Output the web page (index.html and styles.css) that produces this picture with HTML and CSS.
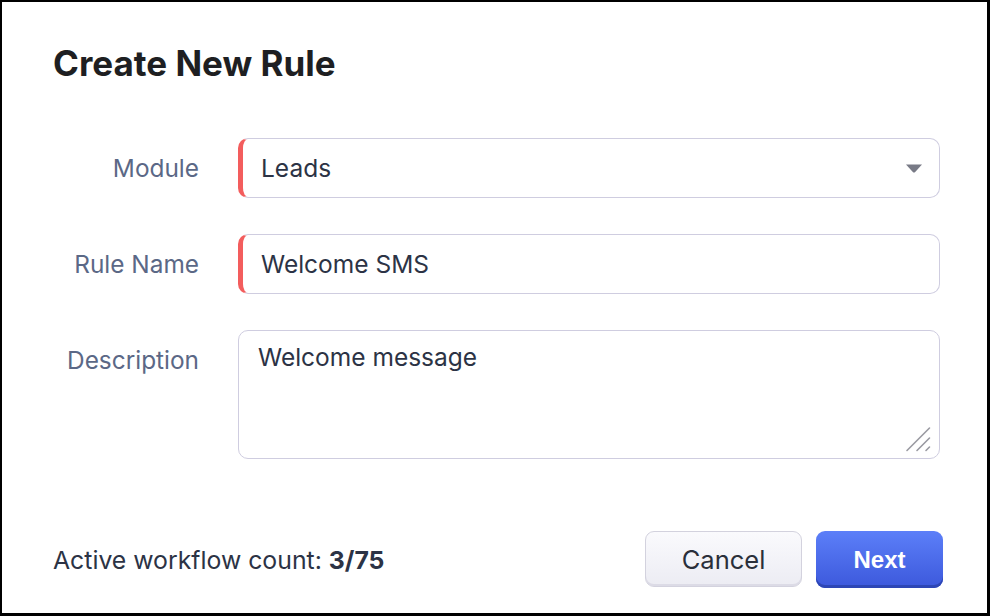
FILE: index.html
```html
<!DOCTYPE html>
<html lang="en">
<head>
<meta charset="utf-8">
<title>Create New Rule</title>
<link rel="stylesheet" href="styles.css">
</head>
<body>
<div class="dialog">
  <h1 class="title">Create New Rule</h1>
  <div class="form">
    <div class="row">
      <label class="label">Module</label>
      <div class="field required select">
        <span class="value">Leads</span>
        <svg class="caret" width="16" height="9" viewBox="0 0 16 9"><path d="M0 0.5 H16 L9.2 8 Q8 9 6.8 8 Z" fill="#787a86"/></svg>
      </div>
    </div>
    <div class="row">
      <label class="label">Rule Name</label>
      <div class="field required">
        <input class="input" type="text" value="Welcome SMS">
      </div>
    </div>
    <div class="row row-top">
      <label class="label label-top">Description</label>
      <div class="area-wrap">
        <textarea class="textarea">Welcome message</textarea>
        <svg class="grip" width="26" height="26" viewBox="0 0 26 26"><path d="M2 24.5 L24.5 2 M12 24.5 L24.5 12 M21 24.5 L24.5 21" stroke="#9a9aa2" stroke-width="1.6" stroke-linecap="round" fill="none"/></svg>
      </div>
    </div>
  </div>
  <div class="footer">
    <div class="count">Active workflow count: <b>3/75</b></div>
    <div class="actions">
      <button class="btn btn-cancel">Cancel</button>
      <button class="btn btn-next">Next</button>
    </div>
  </div>
</div>
</body>
</html>
```
FILE: styles.css
```css
* { box-sizing: border-box; }
html, body { margin: 0; padding: 0; background: #fff; }
body { font-family: Inter, "Noto Sans", sans-serif; }
.dialog {
  width: 990px;
  height: 616px;
  border-style: solid;
  border-color: #000;
  border-width: 2px 3px 3px 2px;
  padding: 41px 44px 0 51px;
  display: flex;
  flex-direction: column;
}
.title {
  margin: 0;
  font-size: 35px;
  line-height: 40px;
  font-weight: 700;
  color: #1e1f22;
}
.form {
  margin-top: 55px;
  display: flex;
  flex-direction: column;
  gap: 36px;
  padding-right: 3px;
}
.row {
  display: flex;
  align-items: center;
}
.row-top { align-items: flex-start; }
.label {
  width: 146px;
  margin-right: 39px;
  text-align: right;
  font-size: 24.4px;
  color: #5b6886;
  flex: none;
}
.label-top { padding-top: 15px; }
.field {
  flex: 1;
  height: 60px;
  border: 1px solid #cfcde0;
  border-radius: 10px;
  display: flex;
  align-items: center;
  background: #fff;
}
.required { border-left: 5px solid #f35d5d; }
.value, .input {
  font-family: Inter, "Noto Sans", sans-serif;
  font-size: 24.5px;
  color: #2c3345;
}
.select { padding: 0 17px 0 18px; justify-content: space-between; }
.caret { display: block; margin-top: 1px; }
.input {
  border: 0;
  outline: 0;
  background: transparent;
  width: 100%;
  height: 100%;
  padding: 0 18px;
}
.area-wrap {
  flex: 1;
  position: relative;
  display: flex;
}
.textarea {
  flex: 1;
  height: 129px;
  border: 1px solid #cfcde0;
  border-radius: 10px;
  padding: 11px 19px;
  font-family: Inter, "Noto Sans", sans-serif;
  font-size: 24.5px;
  line-height: 30px;
  color: #2c3345;
  resize: none;
  outline: 0;
}
.grip {
  position: absolute;
  right: 9px;
  bottom: 7px;
  pointer-events: none;
}
.footer {
  margin-top: auto;
  margin-bottom: 25px;
  display: flex;
  align-items: center;
  justify-content: space-between;
}
.count {
  font-size: 24.8px;
  color: #2c3345;
}
.count b { font-weight: 700; }
.actions { display: flex; gap: 14px; align-items: flex-start; }
.btn {
  height: 57px;
  border-radius: 9px;
  font-size: 24px;
  cursor: pointer;
}
.btn-cancel {
  width: 157px;
  font-family: Inter, "Noto Sans", sans-serif;
  font-size: 25.5px;
  color: #2a2f3a;
  background: linear-gradient(#fafafd, #ececf3);
  border: 1px solid #d3d2de;
  box-shadow: inset 0 -2px 0 #dcdbe6;
  height: 56px;
}
.btn-next {
  width: 127px;
  font-family: "Liberation Sans", Arial, sans-serif;
  font-weight: 700;
  color: #fff;
  background: linear-gradient(#5c7ff8, #3c58dc);
  border: 0;
  box-shadow: inset 0 -3px 0 #2d46b5;
}
```
